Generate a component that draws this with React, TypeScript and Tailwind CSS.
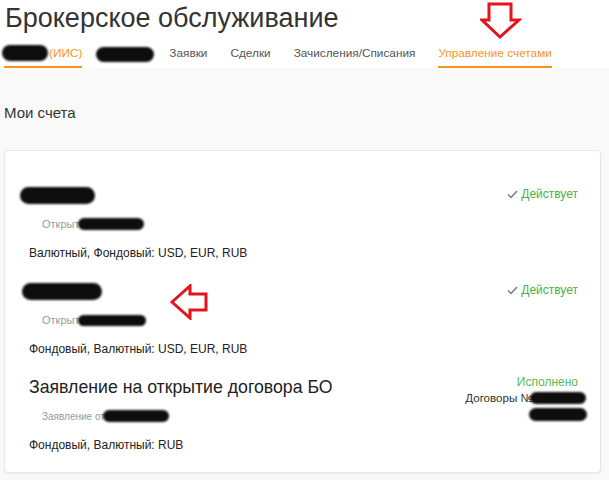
import React from "react";

const font = { fontFamily: '"Liberation Sans", Arial, sans-serif' };

function Blot({ className }: { className: string }) {
  return <span className={`inline-block bg-[#0d0d0d] rounded-full blur-[0.8px] align-middle ${className}`} />;
}

const tabs = [
  { label: "Заявки" },
  { label: "Сделки" },
  { label: "Зачисления/Списания" },
];

function Status({ text }: { text: string }) {
  return (
    <div className="self-start flex items-center gap-[2px] pt-[4px] text-[12px] leading-4 text-[#4cae4c]">
      <svg width="11" height="9" viewBox="0 0 11 9" className="mr-[1px]">
        <path d="M1 4.5 L4 7.5 L10 1" fill="none" stroke="#777" strokeWidth="1.4" />
      </svg>
      {text}
    </div>
  );
}

export default function App() {
  return (
    <div className="relative w-[609px] h-[480px] overflow-hidden bg-[#f9f9f9]" style={font}>
      {/* header */}
      <div className="bg-white px-[5px]">
        <h1 className="text-[27px] leading-[36px] text-[#333]">Брокерское обслуживание</h1>
        <div className="flex gap-[23px] mt-[9px] -ml-[1px] text-[11.8px] leading-4 text-[#555]">
          <div className="flex items-center pb-[5px] border-b-2 border-[#f7941d] text-[#f7941d]">
            <Blot className="w-[46px] h-[16px] -ml-[2px] mr-[1px]" />
            (ИИС)
          </div>
          <div className="flex items-center pb-[5px]">
            <Blot className="w-[58px] h-[15px] -ml-[9px] -mr-[8px]" />
          </div>
          {tabs.map((t) => (
            <div key={t.label} className="pb-[5px]">
              {t.label}
            </div>
          ))}
          <div className="pb-[5px] border-b-2 border-[#f7941d] text-[#f7941d]">Управление счетами</div>
        </div>
      </div>

      {/* body */}
      <div className="px-[4px] pr-[8px]">
        <div className="pt-[35px] pb-[27px] text-[15px] leading-[20px] text-[#333]">Мои счета</div>

        <div className="bg-white border border-[#e6e6e6] rounded-[4px] shadow-[0_1px_2px_rgba(0,0,0,0.06)] pt-[31px] pb-[2px] pl-[24px] pr-[22px]">
          {/* item 1 */}
          <div className="flex items-start justify-between pb-4">
            <div>
              <div className="h-[26px] flex items-center">
                <Blot className="w-[75px] h-[17px] -ml-[9px]" />
              </div>
              <div className="mt-2 h-4 flex items-center pl-[13px] text-[11px] text-[#999]">
                Открыт
                <Blot className="w-[66px] h-[12px] -ml-[1px]" />
              </div>
              <div className="mt-3 h-[18px] flex items-center text-[12px] text-[#222]">
                Валютный, Фондовый: USD, EUR, RUB
              </div>
            </div>
            <Status text="Действует" />
          </div>

          {/* item 2 */}
          <div className="flex items-start justify-between pb-4">
            <div>
              <div className="h-[26px] flex items-center">
                <Blot className="w-[80px] h-[17px] -ml-[7px]" />
              </div>
              <div className="mt-2 h-4 flex items-center pl-[13px] text-[11px] text-[#999]">
                Открыт
                <Blot className="w-[68px] h-[11px] -ml-[1px]" />
              </div>
              <div className="mt-3 h-[18px] flex items-center text-[12px] text-[#222]">
                Фондовый, Валютный: USD, EUR, RUB
              </div>
            </div>
            <Status text="Действует" />
          </div>

          {/* item 3 */}
          <div className="flex items-start justify-between pb-4">
            <div>
              <div className="h-[26px] flex items-center text-[17.7px] text-[#222]">
                Заявление на открытие договора БО
              </div>
              <div className="mt-2 h-4 flex items-center pl-[13px] text-[10px] text-[#999]">
                Заявление от
                <Blot className="w-[66px] h-[12px] -ml-[2px]" />
              </div>
              <div className="mt-3 h-[18px] flex items-center text-[12px] text-[#222]">
                Фондовый, Валютный: RUB
              </div>
            </div>
            <div className="flex flex-col items-end text-[12px] leading-4">
              <div className="text-[#5cb85c] h-4">Исполнено</div>
              <div className="flex items-center text-[#333] text-[11.6px] h-4">
                Договоры №
                <Blot className="w-[56px] h-[12px] -ml-[3px] -mr-[8px]" />
              </div>
              <div className="h-4 flex items-center">
                <Blot className="w-[58px] h-[13px] -mr-[9px]" />
              </div>
            </div>
          </div>
        </div>
      </div>

      {/* annotation arrows */}
      <svg className="absolute left-[480px] top-[2px]" width="42" height="38" viewBox="0 0 42 38">
        <path d="M9 2 H31 V18 H39 L20 35 L2 18 H9 Z" fill="none" stroke="#e3141b" strokeWidth="3" strokeLinejoin="miter" />
      </svg>
      <svg className="absolute left-[169px] top-[284px]" width="40" height="36" viewBox="0 0 40 36">
        <path d="M3 18 L21 2 V10 H37 V26 H21 V34 Z" fill="none" stroke="#e3141b" strokeWidth="3" strokeLinejoin="miter" />
      </svg>
    </div>
  );
}
